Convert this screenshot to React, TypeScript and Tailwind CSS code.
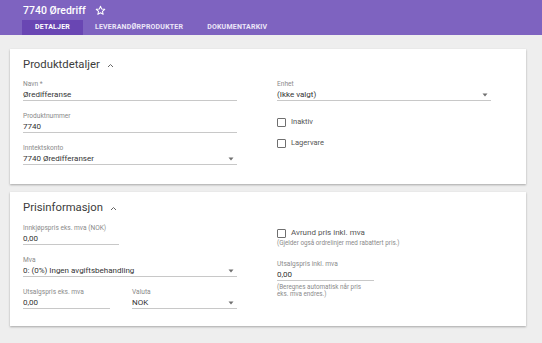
import React from "react";

const font = { fontFamily: "Roboto, 'Noto Sans', sans-serif" };

function Arrow() {
  return (
    <svg width="6" height="4" viewBox="0 0 6 4" className="mr-[3px] shrink-0">
      <path d="M0.5 0.5 L5.5 0.5 L3 3.5 Z" fill="#707070" />
    </svg>
  );
}

function Field({
  label,
  value,
  width,
  select,
}: {
  label: string;
  value: string;
  width: string;
  select?: boolean;
}) {
  return (
    <div className={`${width} flex flex-col`}>
      <div className="h-[9px] text-[6.6px] leading-[9px] text-[#8a8a8a] whitespace-nowrap">{label}</div>
      <div className="h-[11px] flex items-center justify-between border-b border-[#c8c8c8] box-content">
        <span className="text-[8px] leading-[11px] text-[#333333] whitespace-nowrap">{value}</span>
        {select && <Arrow />}
      </div>
    </div>
  );
}

function Check({ label, big }: { label: string; big?: boolean }) {
  return (
    <div className="h-[10px] flex items-center gap-[5px]">
      <div className="w-[9px] h-[9px] border-[1.5px] border-[#6f6f6f] rounded-[1px] shrink-0" />
      <span className={`${big ? "text-[8px]" : "text-[7.5px]"} leading-[10px] text-[#555555]`}>{label}</span>
    </div>
  );
}

function Title({ text }: { text: string }) {
  return (
    <div className="h-[16px] flex items-center gap-[7px]">
      <span className="text-[11.3px] leading-[16px] text-[#3c3c3c]">{text}</span>
      <svg width="7" height="5" viewBox="0 0 7 5">
        <path d="M1 4 L3.5 1.5 L6 4" fill="none" stroke="#666" strokeWidth="1" />
      </svg>
    </div>
  );
}

export default function App() {
  return (
    <div className="w-[542px] h-[343px] bg-[#eeeeee] overflow-hidden" style={font}>
      <header className="h-[35px] bg-[#7e63c0] flex flex-col">
        <div className="h-[20px] pl-[23px] pt-[1px] flex items-center gap-[9px]">
          <span className="text-[10.5px] font-medium text-white leading-[14px]">7740 Øredriff</span>
          <svg width="11" height="11" viewBox="0 0 24 24">
            <path
              d="M12 2.8l2.7 6.1 6.6.6-5 4.4 1.5 6.5L12 17l-5.8 3.4 1.5-6.5-5-4.4 6.6-.6z"
              fill="none"
              stroke="white"
              strokeWidth="2.2"
              strokeLinejoin="round"
            />
          </svg>
        </div>
        <div className="h-[15px] pl-[22px] flex">
          <div className="px-[13px] bg-[#6946b3] flex items-center text-[7px] tracking-[0.2px] font-bold text-white">
            DETALJER
          </div>
          <div className="px-[12px] flex items-center text-[7px] tracking-[0.2px] font-bold text-[#ece6f8]">
            LEVERANDØRPRODUKTER
          </div>
          <div className="px-[12px] flex items-center text-[7px] tracking-[0.2px] font-bold text-[#ece6f8]">
            DOKUMENTARKIV
          </div>
        </div>
      </header>
      <div className="pl-[10px] pr-[16px] pt-[14px] flex flex-col gap-[8px]">
        <section className="h-[135px] bg-white shadow-[0_1px_2px_rgba(0,0,0,0.3)] pl-[13px] pt-[8px]">
          <Title text="Produktdetaljer" />
          <div className="mt-[7px] grid grid-cols-[214px_214px] gap-x-[40px]">
            <div className="flex flex-col gap-[11px]">
              <Field label="Navn *" value="Øredifferanse" width="w-[214px]" />
              <Field label="Produktnummer" value="7740" width="w-[214px]" />
              <Field label="Inntektskonto" value="7740 Øredifferanser" width="w-[214px]" select />
            </div>
            <div className="flex flex-col">
              <Field label="Enhet" value="(Ikke valgt)" width="w-[214px]" select />
              <div className="mt-[16px] flex flex-col gap-[11px]">
                <Check label="Inaktiv" />
                <Check label="Lagervare" />
              </div>
            </div>
          </div>
        </section>
        <section className="h-[134px] bg-white shadow-[0_1px_2px_rgba(0,0,0,0.3)] pl-[13px] pt-[8px]">
          <Title text="Prisinformasjon" />
          <div className="mt-[8px] grid grid-cols-[214px_214px] gap-x-[40px]">
            <div className="flex flex-col gap-[11px]">
              <Field label="Innkjøpspris eks. mva (NOK)" value="0,00" width="w-[96px]" />
              <Field label="Mva" value="0: (0%) Ingen avgiftsbehandling" width="w-[214px]" select />
              <div className="flex gap-[22px]">
                <Field label="Utsalgspris eks. mva" value="0,00" width="w-[87px]" />
                <Field label="Valuta" value="NOK" width="w-[105px]" select />
              </div>
            </div>
            <div className="flex flex-col">
              <div className="mt-[4px]">
                <Check label="Avrund pris inkl. mva" big />
              </div>
              <div className="text-[6.3px] leading-[7px] text-[#8a8a8a] mt-[2px] whitespace-nowrap">
                (Gjelder også ordrelinjer med rabattert pris.)
              </div>
              <div className="mt-[13px]">
                <Field label="Utsalgspris inkl. mva" value="0,00" width="w-[97px]" />
              </div>
              <div className="mt-[3px] text-[6.3px] leading-[7px] text-[#8a8a8a]">
                (Beregnes automatisk når pris
                <br />
                eks. mva endres.)
              </div>
            </div>
          </div>
        </section>
      </div>
    </div>
  );
}
